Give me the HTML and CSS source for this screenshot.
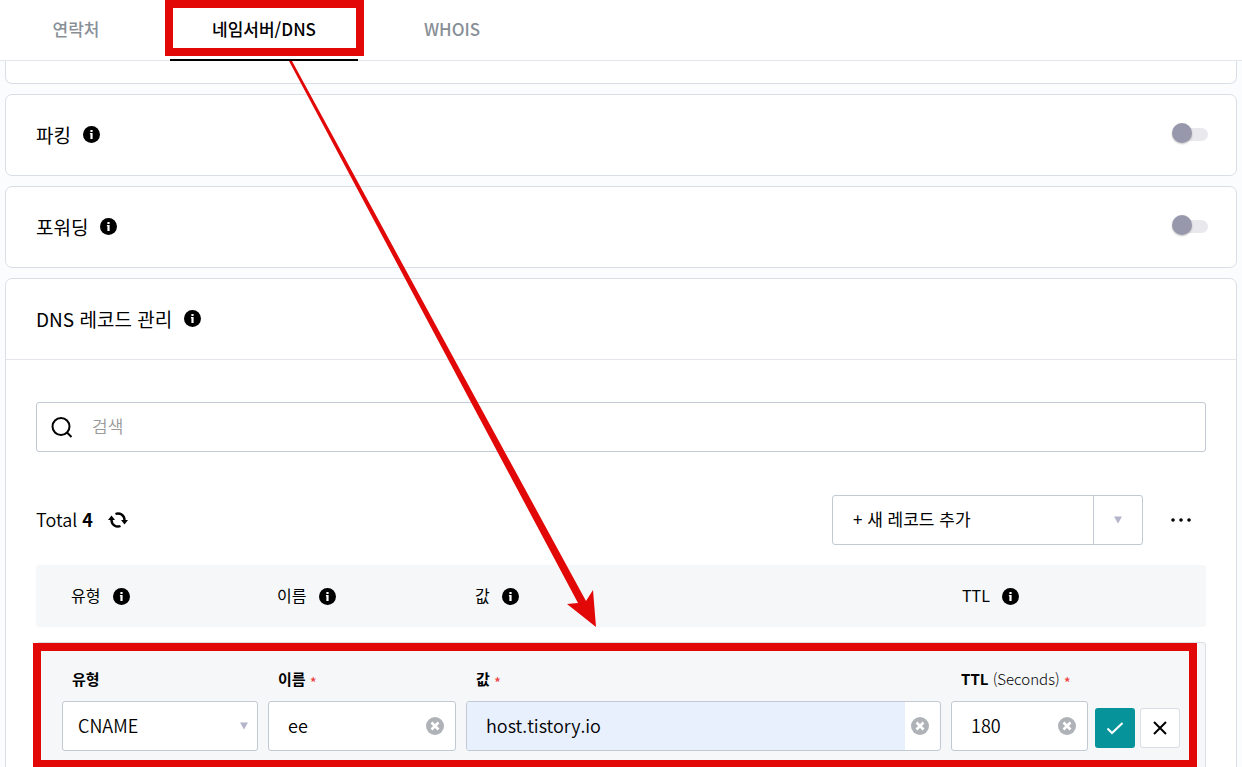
FILE: index.html
```html
<!DOCTYPE html>
<html lang="ko">
<head>
  <meta charset="UTF-8" />
  <meta name="viewport" content="width=device-width, initial-scale=1.0"/>
  <title>네임서버/DNS</title>
  <link rel="stylesheet" href="styles.css">
</head>
<body>
  <svg class="sprite" aria-hidden="true">
    <symbol id="info" viewBox="0 0 17 17">
      <circle cx="8.5" cy="8.5" r="8.5" fill="#000"/>
      <path d="M7.4 4h2.2v2H7.4zM6.9 7h2.7v6H7.4V8.2h-.5z" fill="#fff"/>
    </symbol>
    <symbol id="clear" viewBox="0 0 18 18">
      <circle cx="9" cy="9" r="9" fill="#afb3b8"/>
      <path d="M5.5 5.5l7 7M12.5 5.5l-7 7" stroke="#fff" stroke-width="2.6"/>
    </symbol>
    <symbol id="caret" viewBox="0 0 8 8">
      <path d="M0 .5h8L4 7.5z" fill="#b4b4ca"/>
    </symbol>
  </svg>

  <header>
    <nav class="tabs">
      <a href="#contact">연락처</a>
      <a href="#dns" class="active">네임서버/DNS<span class="mark mark-tab"></span></a>
      <a href="#whois">WHOIS</a>
    </nav>
  </header>

  <main>
    <section class="card card-cut"></section>

    <section class="card">
      <div class="card-head">
        <h2><label for="parking">파킹</label> <svg class="info"><use href="#info"/></svg></h2>
        <input type="checkbox" class="toggle" id="parking">
      </div>
    </section>

    <section class="card">
      <div class="card-head">
        <h2><label for="forwarding">포워딩</label> <svg class="info"><use href="#info"/></svg></h2>
        <input type="checkbox" class="toggle" id="forwarding">
      </div>
    </section>

    <section class="card">
      <div class="card-head divided">
        <h2>DNS 레코드 관리 <svg class="info"><use href="#info"/></svg></h2>
      </div>
      <div class="card-body">
        <div class="search">
          <svg viewBox="0 0 22 22"><circle cx="10" cy="10.5" r="8.5"/><path d="M16 16.5l4.5 4.5"/></svg>
          <input type="search" placeholder="검색" aria-label="검색">
        </div>

        <div class="toolbar">
          <p class="total">Total <b>4</b></p>
          <button type="button" class="refresh" aria-label="새로고침">
            <svg viewBox="0 0 20 18">
              <path d="M7.5 3a6.5 6.5 0 0 1 9 6M12.5 15a6.5 6.5 0 0 1-9-6" fill="none" stroke="#000" stroke-width="2.4"/>
              <path d="M0 9l3.5-4.5L7 9zM13 9h7l-3.5 4.5z"/>
            </svg>
          </button>
          <div class="add">
            <button type="button" class="add-main">+ 새 레코드 추가</button>
            <button type="button" class="add-more" aria-label="유형 선택"><svg class="caret"><use href="#caret"/></svg></button>
          </div>
          <button type="button" class="more" aria-label="더보기">
            <svg viewBox="0 0 20 4"><circle cx="2" cy="2" r="1.8"/><circle cx="10" cy="2" r="1.8"/><circle cx="18" cy="2" r="1.8"/></svg>
          </button>
        </div>

        <table class="records">
          <thead>
            <tr>
              <th class="col-type">유형 <svg class="info"><use href="#info"/></svg></th>
              <th class="col-name">이름 <svg class="info"><use href="#info"/></svg></th>
              <th>값 <svg class="info"><use href="#info"/></svg></th>
              <th class="col-ttl">TTL <svg class="info"><use href="#info"/></svg></th>
            </tr>
          </thead>
          <tbody>
            <tr>
              <td colspan="4">
                <form class="record-form">
                  <div class="fields">
                    <div class="field">
                      <label for="type">유형</label>
                      <div class="box">
                        <select id="type"><option>CNAME</option></select>
                        <svg class="caret"><use href="#caret"/></svg>
                      </div>
                    </div>
                    <div class="field">
                      <label for="name">이름 <i>*</i></label>
                      <div class="box">
                        <input type="text" id="name" value="ee">
                        <button type="button" class="clear" aria-label="지우기"><svg><use href="#clear"/></svg></button>
                      </div>
                    </div>
                    <div class="field">
                      <label for="value">값 <i>*</i></label>
                      <div class="box">
                        <input type="text" id="value" class="filled" value="host.tistory.io">
                        <button type="button" class="clear" aria-label="지우기"><svg><use href="#clear"/></svg></button>
                      </div>
                    </div>
                    <div class="field">
                      <label for="ttl">TTL <span>(Seconds)</span> <i>*</i></label>
                      <div class="box">
                        <input type="text" id="ttl" value="180">
                        <button type="button" class="clear" aria-label="지우기"><svg><use href="#clear"/></svg></button>
                      </div>
                    </div>
                  </div>
                  <div class="actions">
                    <button type="button" class="save" aria-label="저장"><svg viewBox="0 0 16 16"><path d="M.5 8.5l4.5 4.5L15.5 3"/></svg></button>
                    <button type="button" class="cancel" aria-label="취소"><svg viewBox="0 0 16 16"><path d="M2 2l12 12M14 2L2 14"/></svg></button>
                  </div>
                  <span class="mark mark-form"></span>
                </form>
              </td>
            </tr>
          </tbody>
        </table>
      </div>
    </section>
  </main>

  <svg class="arrow" viewBox="0 0 600 630" aria-hidden="true">
    <path d="M289 61L292 61L586 601L593 590L596 627L567 604L578 603Z"/>
  </svg>
</body>
</html>
```

FILE: styles.css
```css
* { box-sizing: border-box; }
body { font-family: "Noto Sans CJK KR", sans-serif; font-size: 17px; color: #000; background: #fbfcfe; margin: 0; height: 100vh; overflow: hidden; position: relative; }
button, input, select { font: inherit; color: inherit; margin: 0; padding: 0; border: 0; background: none; outline: none; }
button { cursor: pointer; }
svg { display: block; flex: none; }
.sprite { display: none; }

header { background: #fff; border-bottom: 1px solid #e3e7eb; height: 61px; }
.tabs { display: flex; margin-left: -18px; }
.tabs a { position: relative; width: 188px; height: 61px; line-height: 58px; text-align: center; color: #888f96; font-weight: 500; text-decoration: none; }
.tabs a.active { color: #000; border-bottom: 2px solid #000; }

main { display: flex; flex-direction: column; gap: 10px; padding: 0 5px; }
.card { background: #fff; border: 1px solid #d9dfe4; border-radius: 7px; }
.card-cut { height: 23px; border-top: 0; border-radius: 0 0 7px 7px; }
.card-head { display: flex; align-items: center; justify-content: space-between; height: 80px; padding: 0 28px 2px 30px; }
.card-head.divided { height: 81px; border-bottom: 1px solid #e3e7eb; }
h2 { display: flex; align-items: center; gap: 12px; margin: 0; font-size: 19px; font-weight: 400; }
.info { width: 17px; height: 17px; }
.card-body { padding: 42px 30px; }

.toggle { appearance: none; position: relative; width: 36px; height: 22px; cursor: pointer; }
.toggle::before { content: ""; position: absolute; right: 0; top: 5px; width: 32px; height: 13px; border-radius: 7px; background: #e9e8ed; }
.toggle::after { content: ""; position: absolute; left: 0; top: 0; width: 20px; height: 20px; border-radius: 50%; background: #9898ad; box-shadow: 0 1px 2px rgba(0,0,0,0.25); }

.search { display: flex; align-items: center; gap: 19px; height: 50px; padding: 0 14px; border: 1px solid #c1c9d3; border-radius: 3px; }
.search svg { width: 22px; height: 22px; fill: none; stroke: #000; stroke-width: 2; }
.search input { flex: 1; padding-bottom: 3px; font-weight: 350; }
.search input::placeholder { color: #999; opacity: 1; }

.toolbar { display: flex; align-items: center; margin: 43px 0 20px; height: 50px; }
.total { margin: 0 15px 0 0; padding-bottom: 3px; font-size: 18px; font-weight: 350; }
.total b { font-weight: 700; }
.refresh svg { width: 20px; height: 18px; }
.add { display: flex; width: 311px; height: 50px; margin-left: auto; border: 1px solid #c1c9d3; border-radius: 3px; }
.add-main { flex: 1; padding: 0 0 3px 20px; text-align: left; }
.add-more { display: grid; place-items: center; width: 49px; border-left: 1px solid #c1c9d3; }
.caret { width: 8px; height: 8px; }
.more { display: grid; place-items: center; width: 51px; height: 50px; padding-bottom: 1px; margin-left: 12px; }
.more svg { width: 20px; height: 4px; }

.records { width: 100%; table-layout: fixed; border-collapse: separate; border-spacing: 0; }
th { height: 62px; padding: 0 9px 3px; background: #f5f7f9; text-align: left; font-size: 16px; font-weight: 400; }
th:first-child { padding-left: 35px; border-radius: 3px 0 0 3px; }
th:last-child { padding-left: 10px; border-radius: 0 3px 3px 0; }
th .info { display: inline-block; margin-left: 8px; vertical-align: -3px; }
.col-type { width: 232px; }
.col-name { width: 198px; }
.col-ttl { width: 254px; }
td { padding: 15px 0 0; }

.record-form { position: relative; display: flex; gap: 7px; padding: 26px 25px; background: #f5f7f9; border: 1px solid #d9dfe4; border-radius: 3px; }
.fields { flex: 1; display: grid; grid-template-columns: 196px 188px 1fr 137px; gap: 10px; }
.field label { display: block; height: 20px; margin-bottom: 12px; padding-left: 10px; font-size: 15px; line-height: 20px; font-weight: 700; }
.field label span { font-weight: 300; }
.field label i { color: #f03c3c; font-style: normal; font-weight: 400; line-height: 1; vertical-align: -4px; }
.box { position: relative; display: flex; align-items: center; height: 50px; background: #fff; border: 1px solid #c1c9d3; border-radius: 3px; overflow: hidden; font-size: 18px; font-weight: 350; }
.box input { flex: 1; min-width: 0; height: 100%; padding: 0 0 2px 19px; }
.box input.filled { background: #e8f0fe; }
.box select { appearance: none; width: 100%; height: 100%; padding: 0 0 2px 15px; }
.box .caret { position: absolute; right: 9px; pointer-events: none; }
.clear { display: grid; place-items: center; width: 35px; height: 48px; padding-right: 6px; }
.clear svg { width: 18px; height: 18px; }

.actions { display: flex; gap: 5px; align-self: flex-end; padding-bottom: 3px; }
.actions button { display: grid; place-items: center; width: 40px; height: 40px; border-radius: 3px; }
.actions svg { width: 16px; height: 16px; fill: none; stroke: #000; stroke-width: 2; }
.save { background: #06939a; }
.actions .save svg { stroke: #fff; }
.actions .cancel { background: #fff; border: 1px solid #d9dfe4; }

.mark { position: absolute; border: 8px solid #e20808; pointer-events: none; }
.mark-tab { left: -5px; right: -6px; top: 0; height: 56px; }
.mark-form { left: -4px; right: 8px; top: 0; bottom: 9px; }
.arrow { position: absolute; left: 0; top: 0; width: 600px; height: 630px; fill: #e20808; pointer-events: none; }
```
